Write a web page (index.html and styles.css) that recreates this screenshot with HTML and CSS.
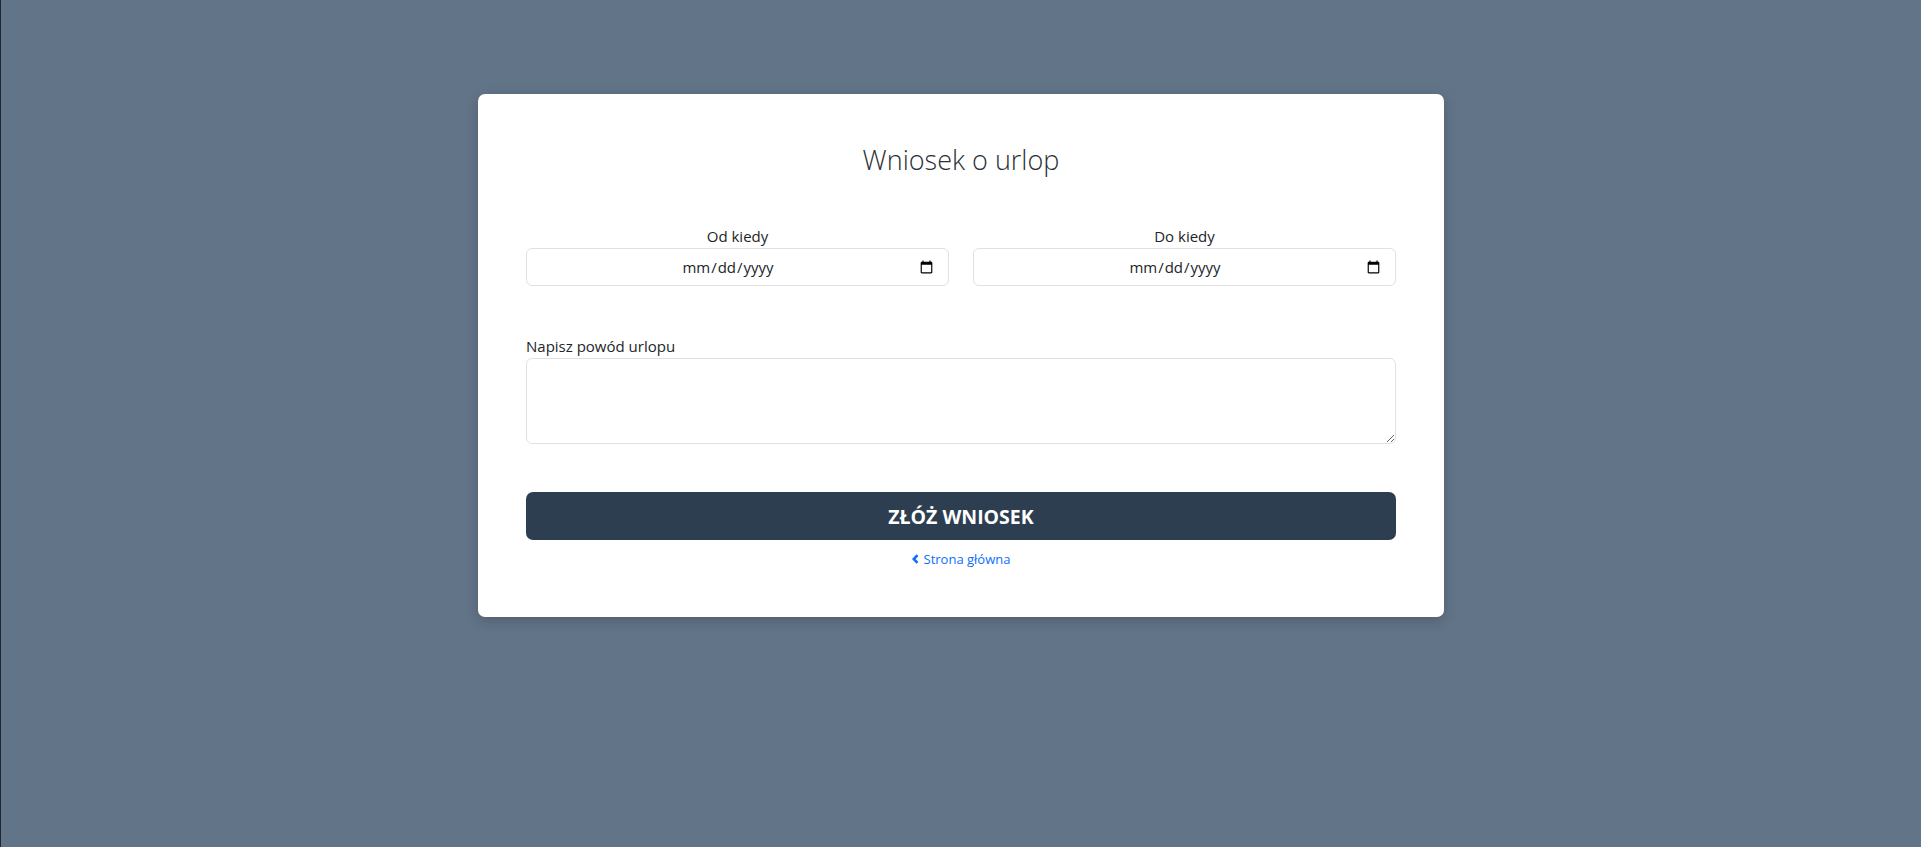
FILE: index.html
```html
<!DOCTYPE html>
<html lang="pl">
<head>
<meta charset="utf-8">
<title>Wniosek o urlop</title>
<link rel="stylesheet" href="styles.css">
</head>
<body>
<main class="page">
  <section class="card">
    <h1 class="title">Wniosek o urlop</h1>
    <form class="form">
      <div class="dates">
        <div class="field field-center">
          <label class="label" for="od">Od kiedy</label>
          <input class="control date" type="date" id="od">
        </div>
        <div class="field field-center">
          <label class="label" for="do">Do kiedy</label>
          <input class="control date" type="date" id="do">
        </div>
      </div>
      <div class="field reason">
        <label class="label" for="powod">Napisz powód urlopu</label>
        <textarea class="control area" id="powod" rows="3"></textarea>
      </div>
      <button class="submit" type="button">ZŁÓŻ WNIOSEK</button>
      <a class="back" href="#"><svg class="chev" width="7" height="10" viewBox="0 0 7 10"><path d="M5.5 1.2 L1.8 5 L5.5 8.8" fill="none" stroke="currentColor" stroke-width="2.6" stroke-linejoin="miter"/></svg>Strona główna</a>
    </form>
  </section>
</main>
</body>
</html>
```
FILE: styles.css
```css
* { box-sizing: border-box; }
html, body { margin: 0; padding: 0; }
body {
  background: #627488;
  font-family: "Segoe UI", "Open Sans", "Noto Sans", sans-serif;
  color: #212529;
  min-height: 100vh;
  border-left: 1px solid #1f2633;
}
.page {
  padding-top: 94px;
  display: flex;
  justify-content: center;
}
.card {
  width: 966px;
  background: #fff;
  border-radius: 7px;
  box-shadow: 0 4px 14px rgba(0, 0, 0, 0.18);
  padding: 48px 48px 48px;
}
.title {
  margin: 0;
  text-align: center;
  font-weight: 300;
  font-size: 27px;
  line-height: 36px;
  color: #2b3035;
}
.form {
  display: flex;
  flex-direction: column;
  margin-top: 47px;
}
.dates {
  display: grid;
  grid-template-columns: 1fr 1fr;
  gap: 24px;
}
.field { display: flex; flex-direction: column; }
.field-center .label { text-align: center; }
.label {
  font-size: 15px;
  line-height: 23px;
  color: #212529;
}
.control {
  font-family: inherit;
  font-size: 15px;
  color: #212529;
  border: 1px solid #dee2e6;
  border-radius: 6px;
  background: #fff;
  padding: 6px 12px;
  outline: none;
}
.date {
  height: 38px;
  text-align: center;
}
.reason { margin-top: 49px; }
.area {
  height: 86px;
  resize: vertical;
}
.submit {
  margin-top: 48px;
  height: 48px;
  border: none;
  border-radius: 7px;
  background: #2c3e50;
  color: #fff;
  font-family: inherit;
  font-weight: 700;
  font-size: 19.5px;
  cursor: pointer;
}
.back {
  align-self: center;
  margin-top: 9px;
  display: flex;
  align-items: center;
  gap: 5px;
  color: #0d6efd;
  font-size: 13px;
  line-height: 20px;
  text-decoration: none;
}
.chev { display: block; }
```
